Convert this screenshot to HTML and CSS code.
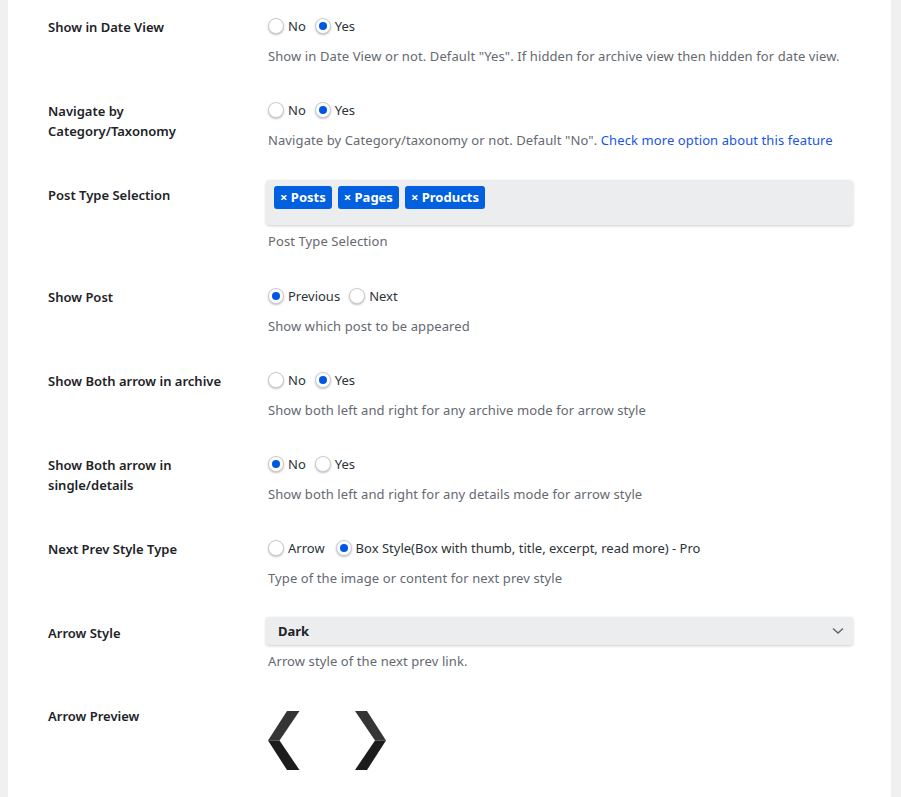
FILE: index.html
```html
<!DOCTYPE html>
<html>
<head>
<meta charset="utf-8">
<link rel="stylesheet" href="styles.css">
</head>
<body>
<div class="panel">
  <div class="row">
    <div class="label">Show in Date View</div>
    <div class="field">
      <div class="radios">
        <label class="radio"><span class="dot"></span>No</label>
        <label class="radio"><span class="dot on"></span>Yes</label>
      </div>
      <p class="desc">Show in Date View or not. Default "Yes". If hidden for archive view then hidden for date view.</p>
    </div>
  </div>
  <div class="row">
    <div class="label">Navigate by Category/Taxonomy</div>
    <div class="field">
      <div class="radios">
        <label class="radio"><span class="dot"></span>No</label>
        <label class="radio"><span class="dot on"></span>Yes</label>
      </div>
      <p class="desc">Navigate by Category/taxonomy or not. Default "No". <a class="link" href="#">Check more option about this feature</a></p>
    </div>
  </div>
  <div class="row row-box">
    <div class="label">Post Type Selection</div>
    <div class="field">
      <div class="tagbox">
        <span class="tag">× Posts</span>
        <span class="tag">× Pages</span>
        <span class="tag">× Products</span>
      </div>
      <p class="desc">Post Type Selection</p>
    </div>
  </div>
  <div class="row">
    <div class="label">Show Post</div>
    <div class="field">
      <div class="radios">
        <label class="radio"><span class="dot on"></span>Previous</label>
        <label class="radio"><span class="dot"></span>Next</label>
      </div>
      <p class="desc">Show which post to be appeared</p>
    </div>
  </div>
  <div class="row">
    <div class="label">Show Both arrow in archive</div>
    <div class="field">
      <div class="radios">
        <label class="radio"><span class="dot"></span>No</label>
        <label class="radio"><span class="dot on"></span>Yes</label>
      </div>
      <p class="desc">Show both left and right for any archive mode for arrow style</p>
    </div>
  </div>
  <div class="row">
    <div class="label">Show Both arrow in single/details</div>
    <div class="field">
      <div class="radios">
        <label class="radio"><span class="dot on"></span>No</label>
        <label class="radio"><span class="dot"></span>Yes</label>
      </div>
      <p class="desc">Show both left and right for any details mode for arrow style</p>
    </div>
  </div>
  <div class="row">
    <div class="label">Next Prev Style Type</div>
    <div class="field">
      <div class="radios">
        <label class="radio wide"><span class="dot"></span>Arrow</label>
        <label class="radio"><span class="dot on"></span>Box Style(Box with thumb, title, excerpt, read more) - Pro</label>
      </div>
      <p class="desc">Type of the image or content for next prev style</p>
    </div>
  </div>
  <div class="row row-select">
    <div class="label">Arrow Style</div>
    <div class="field">
      <div class="select">
        <span>Dark</span>
        <svg class="chev" width="12" height="8" viewBox="0 0 12 8"><path d="M1 1.5 L6 6 L11 1.5" fill="none" stroke="#666" stroke-width="1.5"/></svg>
      </div>
      <p class="desc">Arrow style of the next prev link.</p>
    </div>
  </div>
  <div class="row row-preview">
    <div class="label">Arrow Preview</div>
    <div class="field">
      <svg class="arrows" width="120" height="62" viewBox="0 0 120 62">
        <polygon points="19,1 31.5,1 11.5,30.5 0,30.5" fill="#353535"/>
        <polygon points="0,30.5 11.5,30.5 31.5,60 19,60" fill="#1c1c1c"/>
        <polygon points="87,1 99,1 118,30.5 107,30.5" fill="#353535"/>
        <polygon points="107,30.5 118,30.5 99,60 87,60" fill="#1c1c1c"/>
      </svg>
    </div>
  </div>
</div>
</body>
</html>
```

FILE: styles.css
```css
html, body {
  margin: 0;
  padding: 0;
}
body {
  background: #f0f0f1;
  font-family: "Noto Sans", "Open Sans", sans-serif;
  font-size: 13px;
  color: #3c434a;
  height: 797px;
  overflow: hidden;
}
.panel {
  margin-left: 8px;
  width: 883px;
  background: #fff;
  padding-left: 40px;
  box-sizing: border-box;
  min-height: 797px;
}
.row {
  display: flex;
  padding: 16px 0 18px;
}
.label {
  width: 220px;
  flex: none;
  box-sizing: border-box;
  padding: 1px 20px 0 0;
  font-weight: 600;
  color: #1d2327;
  line-height: 20px;
}
.field {
  flex: 1;
  padding-right: 38px;
}
.radios {
  display: flex;
  align-items: center;
  height: 20px;
  gap: 9px;
}
.radio {
  display: flex;
  align-items: center;
  gap: 4px;
  color: #2c3338;
  line-height: 20px;
}
.radio.wide {
  margin-right: 2px;
}
.dot {
  width: 14px;
  height: 14px;
  border: 1px solid #c9cbce;
  border-radius: 50%;
  background: #fff;
  box-shadow: 0 1px 2px rgba(0,0,0,0.25);
  position: relative;
  flex: none;
}
.dot.on::after {
  content: "";
  position: absolute;
  left: 3px;
  top: 3px;
  width: 8px;
  height: 8px;
  border-radius: 50%;
  background: #0058e0;
}
.desc {
  margin: 10px 0 0;
  line-height: 20px;
  color: #646970;
  letter-spacing: 0.1px;
}
.link {
  color: #1a55e3;
  text-decoration: none;
}
.row-box {
  padding-top: 12px;
  padding-bottom: 19px;
}
.row-box .label {
  padding-top: 5px;
}
.tagbox {
  margin-left: -2px;
  height: 45px;
  background: #ecedef;
  border-radius: 4px;
  box-shadow: 0 1px 3px rgba(0,0,0,0.2);
  padding: 6px 8px;
  box-sizing: border-box;
  display: flex;
  align-items: flex-start;
  gap: 6px;
}
.tag {
  background: #0060e0;
  color: #fff;
  font-weight: 700;
  border-radius: 3px;
  height: 23px;
  line-height: 23px;
  padding: 0 6px;
  font-size: 13px;
}
.row-box .desc {
  margin-top: 6px;
}
.row-select {
  padding-top: 11px;
}
.row-select .label {
  padding-top: 6px;
}
.select {
  margin-left: -2px;
  height: 28px;
  background: #ecedee;
  border-radius: 3px;
  box-shadow: 0 1px 3px rgba(0,0,0,0.2);
  display: flex;
  align-items: center;
  justify-content: space-between;
  padding: 0 9px 0 12px;
  font-weight: 700;
  color: #1d2327;
}
.row-select .desc {
  margin-top: 6px;
}
.arrows {
  display: block;
  margin-top: 5px;
}
```
